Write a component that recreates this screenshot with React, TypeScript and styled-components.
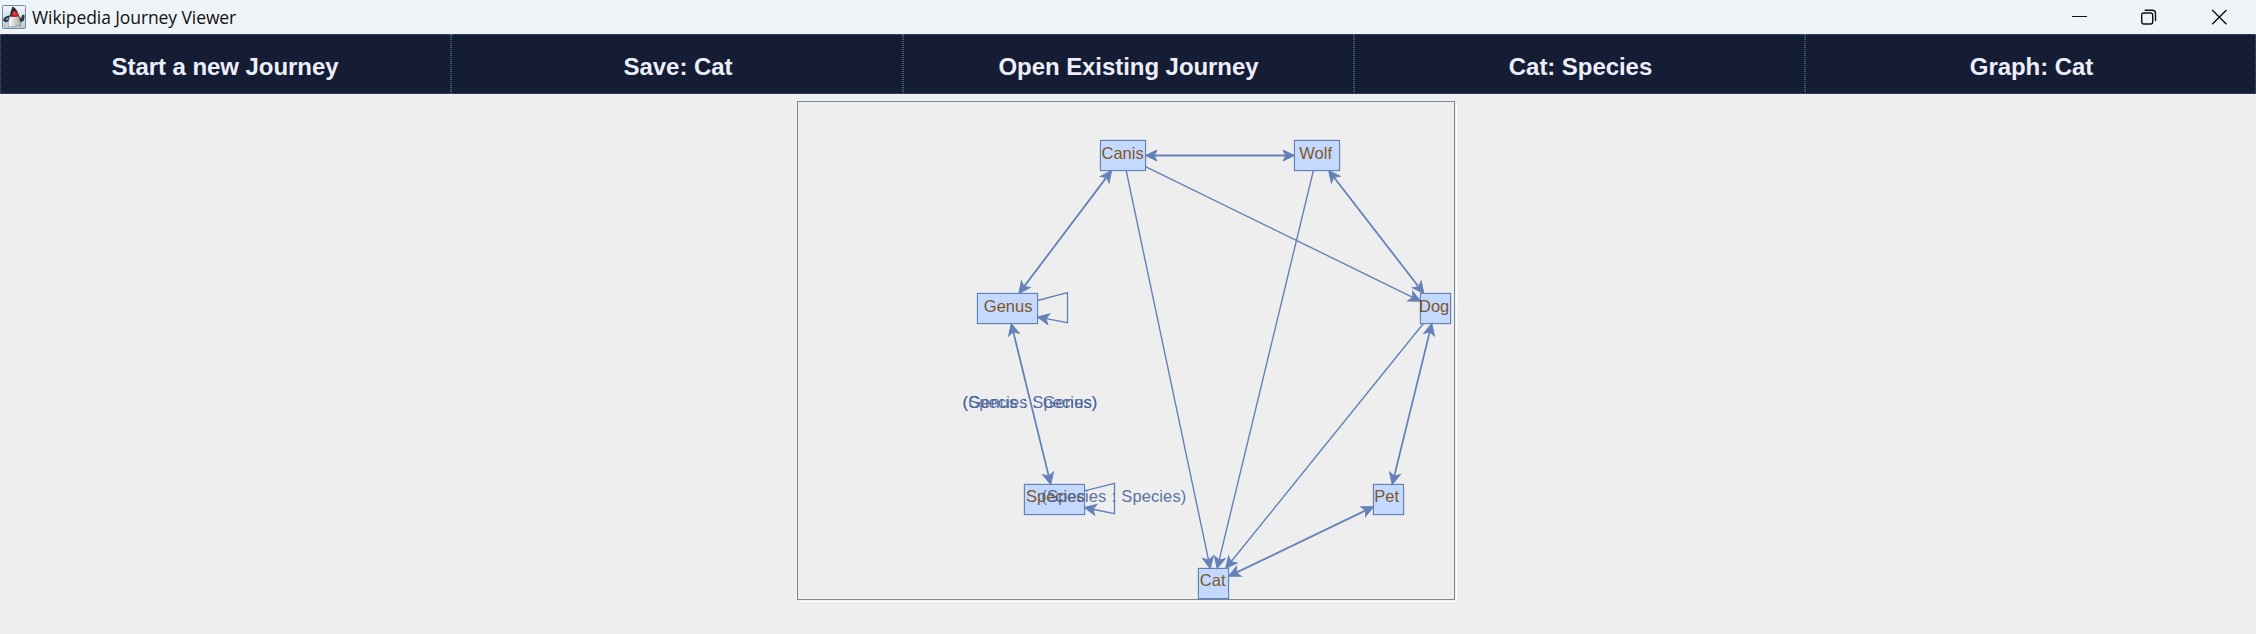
import React from 'react';
import styled, { createGlobalStyle } from 'styled-components';

const GlobalStyle = createGlobalStyle`
  html, body { margin: 0; padding: 0; background: #eeeeee; }
  body { overflow: hidden; }
`;

const Window = styled.div`
  width: 2256px;
  height: 634px;
  display: flex;
  flex-direction: column;
  background: #eeeeee;
  font-family: 'Liberation Sans', Arial, sans-serif;
`;

const TitleBar = styled.header`
  height: 34px;
  flex: none;
  display: flex;
  align-items: center;
  background: #eff4f9;
`;

const AppIcon = styled.svg`
  width: 24px;
  height: 24px;
  margin-left: 2px;
  flex: none;
`;

const Title = styled.span`
  margin-left: 6px;
  flex: 1;
  font: 17.5px/24px 'Open Sans', 'Noto Sans', sans-serif;
  letter-spacing: -0.09px;
  color: #111;
`;

const WindowControls = styled.div`
  display: flex;
  padding-right: 2px;
`;

const ControlButton = styled.button`
  width: 70px;
  height: 34px;
  padding: 0;
  border: 0;
  background: none;
  display: flex;
  align-items: center;
  justify-content: center;
`;

const Toolbar = styled.nav`
  flex: none;
  height: 60px;
  display: grid;
  grid-template-columns: 451px 452px 451px 451px 451px;
`;

const ToolbarButton = styled.button<{ $inset: number }>`
  padding: 6px 1px 0 ${(p) => p.$inset}px;
  border: 1px dotted #40617c;
  background: #151d35;
  color: #eeeefb;
  font: bold 24px/28px 'Liberation Sans', Arial, sans-serif;
  letter-spacing: -0.06px;
`;

const Content = styled.main`
  flex: 1;
  display: flex;
  justify-content: center;
  align-items: flex-start;
  padding: 7px 4px 0 0;
`;

const GraphPanel = styled.section`
  position: relative;
  box-sizing: border-box;
  width: 658px;
  height: 499px;
  border: 1px solid #7a8a99;
  box-shadow: 1px 1px 0 #eeeeee, 2px 2px 0 #ffffff;
`;

const Layer = styled.svg`
  position: absolute;
  left: -1px;
  top: -1px;
  width: 658px;
  height: 499px;
  overflow: visible;
`;

const NodeBox = styled.div<{ $x: number; $y: number; $w: number }>`
  position: absolute;
  box-sizing: border-box;
  left: ${(p) => p.$x - 1}px;
  top: ${(p) => p.$y - 1}px;
  width: ${(p) => p.$w + 1}px;
  height: 31px;
  border: 1px solid #6482b9;
  background: #c3d9ff;
  box-shadow: 0 0 1px #6482b9;
`;

type GraphNode = { x: number; y: number; w: number; tx: number; ty: number };

const nodes: Record<string, GraphNode> = {
  Canis: { x: 303, y: 39, w: 45, tx: 304.5, ty: 58 },
  Wolf: { x: 497, y: 39, w: 45, tx: 502.3, ty: 58 },
  Dog: { x: 623, y: 192, w: 30, tx: 622, ty: 211 },
  Genus: { x: 180, y: 192, w: 60, tx: 186.8, ty: 211 },
  Species: { x: 227, y: 383, w: 60, tx: 229, ty: 401 },
  Pet: { x: 576, y: 383, w: 30, tx: 577.3, ty: 401 },
  Cat: { x: 401, y: 467, w: 30, tx: 402.8, ty: 485 },
};

type Point = [number, number];

const edges: { from: string; to: string; both?: boolean }[] = [
  { from: 'Canis', to: 'Wolf', both: true },
  { from: 'Canis', to: 'Genus', both: true },
  { from: 'Canis', to: 'Dog' },
  { from: 'Canis', to: 'Cat' },
  { from: 'Wolf', to: 'Dog', both: true },
  { from: 'Wolf', to: 'Cat' },
  { from: 'Genus', to: 'Species', both: true },
  { from: 'Dog', to: 'Pet', both: true },
  { from: 'Dog', to: 'Cat' },
  { from: 'Pet', to: 'Cat', both: true },
];

const loops: Point[][] = [
  [[240.5, 199.5], [270.5, 191.5], [270.5, 221.7], [240.5, 216]],
  [[287.5, 389.8], [317.5, 382.3], [317.5, 412.7], [287.5, 406.5]],
];

const edgeLabels = [
  { text: '(Genus : Species)', x: 165.6, y: 307 },
  { text: '(Species : Genus)', x: 165.6, y: 307 },
  { text: '(Species : Species)', x: 244.3, y: 401 },
];

const ARROW = 11.5;

const center = (n: GraphNode): Point => [n.x + 0.5 + n.w / 2, n.y + 15.5];

/** Point where the ray from a node's centre towards `to` leaves its box. */
const exitPoint = (n: GraphNode, to: Point): Point => {
  const [cx, cy] = center(n);
  const dx = to[0] - cx;
  const dy = to[1] - cy;
  const t = Math.min(n.w / 2 / Math.abs(dx || 1e-6), 15 / Math.abs(dy || 1e-6));
  return [cx + dx * t, cy + dy * t];
};

const back = (tip: Point, from: Point, d: number): Point => {
  const len = Math.hypot(tip[0] - from[0], tip[1] - from[1]);
  return [tip[0] - ((tip[0] - from[0]) / len) * d, tip[1] - ((tip[1] - from[1]) / len) * d];
};

const Arrow = ({ tip, from }: { tip: Point; from: Point }) => {
  const angle = (Math.atan2(tip[1] - from[1], tip[0] - from[0]) * 180) / Math.PI;
  return (
    <path
      d={`M0 0L${-ARROW} ${-ARROW / 2.1}L${-ARROW * 0.75} 0L${-ARROW} ${ARROW / 2.1}Z`}
      transform={`translate(${tip[0]} ${tip[1]}) rotate(${angle})`}
      fill="#6482b9"
      stroke="#6482b9"
    />
  );
};

const Edge = ({ from, to, both }: { from: string; to: string; both?: boolean }) => {
  const a = exitPoint(nodes[from], center(nodes[to]));
  const b = exitPoint(nodes[to], center(nodes[from]));
  const start = both ? back(a, b, ARROW * 0.75) : a;
  const end = back(b, a, ARROW * 0.75);
  return (
    <g>
      <line x1={start[0]} y1={start[1]} x2={end[0]} y2={end[1]} stroke="#6482b9" strokeWidth={both ? 1.8 : 1.4} />
      <Arrow tip={b} from={a} />
      {both && <Arrow tip={a} from={b} />}
    </g>
  );
};

const Loop = ({ points }: { points: Point[] }) => {
  const end = back(points[3], points[2], ARROW * 0.75);
  return (
    <g>
      <polyline points={[...points.slice(0, 3), end].join(' ')} fill="none" stroke="#6482b9" strokeWidth={1.3} />
      <Arrow tip={points[3]} from={points[2]} />
    </g>
  );
};

const Graph = () => (
  <GraphPanel>
    {Object.entries(nodes).map(([name, n]) => (
      <NodeBox key={name} $x={n.x} $y={n.y} $w={n.w} />
    ))}
    <Layer viewBox="0 0 658 499" fontFamily="'Liberation Sans', Arial, sans-serif" fontSize="16.5">
      {edges.map((e) => (
        <Edge key={e.from + e.to} {...e} />
      ))}
      {loops.map((points, i) => (
        <Loop key={i} points={points} />
      ))}
      <g fill="#774400" fillOpacity="0.9">
        {Object.entries(nodes).map(([name, n]) => (
          <text key={name} x={n.tx} y={n.ty}>{name}</text>
        ))}
      </g>
      <g fill="#446299" fillOpacity="0.9" letterSpacing="0.1" wordSpacing="0.5">
        {edgeLabels.map((l) => (
          <text key={l.text} x={l.x} y={l.y}>{l.text}</text>
        ))}
      </g>
    </Layer>
  </GraphPanel>
);

const DukeIcon = () => (
  <AppIcon viewBox="0 0 24 24">
    <defs>
      <linearGradient id="tile" x1="0" y1="0" x2="0" y2="1">
        <stop offset="0" stopColor="#f4f7fa" />
        <stop offset="1" stopColor="#b9c8d6" />
      </linearGradient>
      <linearGradient id="belly" x1="0" y1="0" x2="1" y2="0">
        <stop offset="0" stopColor="#ffffff" />
        <stop offset="1" stopColor="#a9a9a9" />
      </linearGradient>
    </defs>
    <rect x="0.5" y="0.5" width="23" height="23" rx="1" fill="url(#tile)" stroke="#6d8ba6" />
    <path d="M8.5 10.500C5 10.500 1.500 12 1 15.500L4 17.500L8 15Z" fill="#2c353d" />
    <path d="M4 13.500L7 12.700L6 14.500L3.500 15.300Z" fill="#8fb4cc" />
    <path d="M16 9.500L19 13.500L20.500 9.500L22.700 10.500L22 15.500L18.500 17.500L16 14Z" fill="#33383d" />
    <path d="M8.500 10L16 10C17.500 14 19.500 18 18.500 21.500L15 20.500L11 22L6.500 21.500C6 17 7 13 8.500 10Z" fill="url(#belly)" stroke="#777" strokeWidth="0.5" />
    <path d="M10.500 1.500C13 2 16.500 7 16.700 11L13 12L8 11.500C8 8 9.500 4 10.500 1.500Z" fill="#2a2b30" />
    <circle cx="13" cy="9.200" r="2.900" fill="#d3262c" />
    <circle cx="12.300" cy="8.300" r="0.900" fill="#f07a78" />
  </AppIcon>
);

const buttons = [
  { label: 'Start a new Journey', inset: 0 },
  { label: 'Save: Cat', inset: 3 },
  { label: 'Open Existing Journey', inset: 1 },
  { label: 'Cat: Species', inset: 3 },
  { label: 'Graph: Cat', inset: 3 },
];

export default function App() {
  return (
    <Window>
      <GlobalStyle />
      <TitleBar>
        <DukeIcon />
        <Title>Wikipedia Journey Viewer</Title>
        <WindowControls>
          <ControlButton aria-label="Minimize">
            <svg width="16" height="16" viewBox="0 0 16 16">
              <path d="M1 7.500H16" stroke="#111" fill="none" />
            </svg>
          </ControlButton>
          <ControlButton aria-label="Restore">
            <svg width="16" height="16" viewBox="0 0 16 16" fill="none" stroke="#111" strokeWidth="1.400">
              <rect x="0.700" y="4" width="11" height="11" rx="2" />
              <path d="M3.700 1.200H11.200A3.300 3.300 0 0 1 14.500 4.500V12" />
            </svg>
          </ControlButton>
          <ControlButton aria-label="Close">
            <svg width="16" height="16" viewBox="0 0 16 16" stroke="#111" strokeWidth="1.400">
              <path d="M1.200 1L15.500 15.300M15.500 1L1.200 15.300" />
            </svg>
          </ControlButton>
        </WindowControls>
      </TitleBar>
      <Toolbar>
        {buttons.map((b) => (
          <ToolbarButton key={b.label} $inset={b.inset}>{b.label}</ToolbarButton>
        ))}
      </Toolbar>
      <Content>
        <Graph />
      </Content>
    </Window>
  );
}
